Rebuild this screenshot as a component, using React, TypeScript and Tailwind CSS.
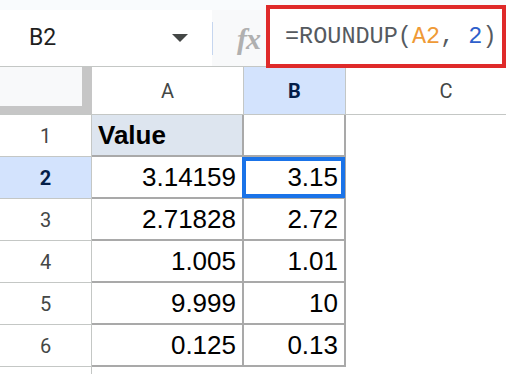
import React from "react";

const rows: { n: number; a: string; b: string }[] = [
  { n: 1, a: "Value", b: "" },
  { n: 2, a: "3.14159", b: "3.15" },
  { n: 3, a: "2.71828", b: "2.72" },
  { n: 4, a: "1.005", b: "1.01" },
  { n: 5, a: "9.999", b: "10" },
  { n: 6, a: "0.125", b: "0.13" },
];

export default function App() {
  return (
    <div className="relative w-[506px] h-[374px] overflow-hidden bg-white" style={{ fontFamily: '"Liberation Sans", Arial, sans-serif' }}>
      {/* top strip */}
      <div className="h-[10px] bg-[#f9fbfd]" />
      {/* toolbar */}
      <div className="flex h-[57px] border-b border-[#c4c7c5]">
        <div className="relative flex h-full w-[212px] shrink-0 items-center bg-white">
          <span className="pl-[29px] text-[23px] text-[#1f1f1f]" style={{ fontFamily: 'Roboto, "Liberation Sans", sans-serif' }}>B2</span>
          <svg className="absolute left-[172px] top-[24px]" width="16" height="8" viewBox="0 0 16 8">
            <polygon points="0,0 16,0 8,8" fill="#444746" />
          </svg>
        </div>
        <div className="flex h-full flex-1 items-center bg-[#f8f9fa]">
          <div className="h-[33px] w-px bg-[#c6d6ef]" />
          <span className="ml-[24px] mt-[2px] text-[30px] italic font-bold text-[#b0b0b0] leading-none tracking-[-1px]" style={{ fontFamily: '"Liberation Serif", serif' }}>fx</span>
        </div>
      </div>
      {/* red highlight box around formula */}
      <div className="absolute left-[266px] top-[5px] flex h-[63px] w-[240px] items-center border-4 border-[#df2a2a] bg-white pl-[15px]">
        <span className="text-[23.5px] whitespace-pre text-[#555a60]" style={{ fontFamily: '"Liberation Mono", monospace' }}>
          =ROUNDUP(<span className="text-[#ef9a36]">A2</span>, <span className="text-[#2f5fcb]">2</span>)
        </span>
      </div>
      {/* header row */}
      <div className="flex h-[48px] border-b border-[#c4c7c5] text-[20px] text-[#444746]" style={{ fontFamily: 'Roboto, "Liberation Sans", sans-serif' }}>
        <div className="h-full w-[92px] shrink-0 bg-[#c6c6c6]">
          <div className="h-[39px] w-[82px] bg-[#f8f9fa]" />
        </div>
        <div className="flex h-full w-[152px] shrink-0 items-center justify-center border-r border-[#c4c7c5] bg-white">A</div>
        <div className="flex h-full w-[102px] shrink-0 items-center justify-center border-r border-[#c4c7c5] bg-[#d3e3fd] font-bold text-[#041e49]">B</div>
        <div className="flex h-full w-[200px] shrink-0 items-center justify-center bg-white">C</div>
      </div>
      {/* data rows */}
      {rows.map((r) => {
        const sel = r.n === 2;
        return (
          <div key={r.n} className="flex h-[42px]">
            <div
              className={
                "flex h-full w-[92px] shrink-0 items-center justify-center border-r border-b border-[#c4c7c5] text-[20px] " +
                (sel ? "bg-[#d3e3fd] font-bold text-[#041e49]" : "text-[#444746]")
              }
              style={{ fontFamily: 'Roboto, "Liberation Sans", sans-serif' }}
            >
              {r.n}
            </div>
            <div
              className={
                "flex h-full w-[152px] shrink-0 items-center border-r-2 border-b-2 border-[#a9a9a9] text-[26px] text-black " +
                (r.n === 1 ? "justify-start bg-[#dde5ef] pl-[6px] font-bold" : "justify-end pr-[6px]")
              }
            >
              {r.a}
            </div>
            <div className="relative flex h-full w-[102px] shrink-0 items-center justify-end border-r-2 border-b-2 border-[#a9a9a9] pr-[6px] text-[26px] text-black">
              {r.b}
              {sel && <div className="absolute -left-[2px] -right-[1px] top-0 -bottom-[1px] border-4 border-[#1a73e8]" />}
            </div>
            <div className="h-full flex-1" />
          </div>
        );
      })}
      <div className="flex h-[10px]">
        <div className="h-full w-[92px] border-r border-[#c4c7c5]" />
      </div>
    </div>
  );
}
